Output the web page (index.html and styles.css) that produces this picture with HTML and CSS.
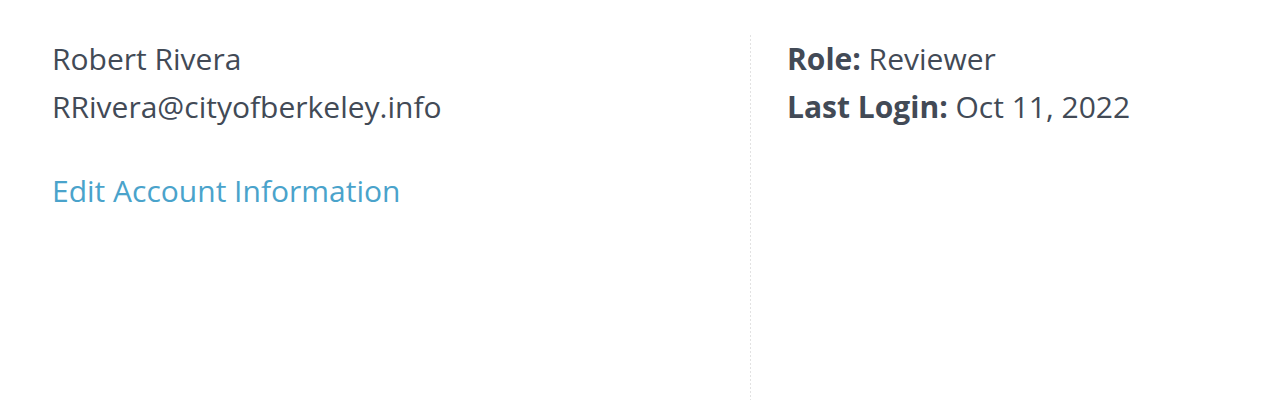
FILE: index.html
```html
<!DOCTYPE html>
<html>
<head>
<meta charset="utf-8">
<link rel="stylesheet" href="styles.css">
</head>
<body>
<div class="account">
  <div class="col col-left">
    <div class="line">Robert Rivera</div>
    <div class="line">RRivera@cityofberkeley.info</div>
    <a class="edit-link" href="#">Edit Account Information</a>
  </div>
  <div class="col col-right">
    <div class="line"><strong>Role:</strong> Reviewer</div>
    <div class="line"><strong>Last Login:</strong> Oct 11, 2022</div>
  </div>
</div>
</body>
</html>
```
FILE: styles.css
```css
html, body {
  margin: 0;
  padding: 0;
  background: #ffffff;
}
body {
  font-family: "Open Sans", "Liberation Sans", sans-serif;
  color: #424a56;
  font-size: 30px;
  line-height: 48px;
}
.account {
  display: flex;
  padding: 35px 0 0 52px;
  height: 365px;
}
.col-left {
  width: 698px;
}
.col-right {
  padding-left: 37px;
  flex: 1;
  background-image: linear-gradient(to bottom, #e2e2e2 50%, transparent 50%);
  background-size: 1px 4px;
  background-repeat: repeat-y;
  background-position: left top;
}
.edit-link {
  display: block;
  margin-top: 36px;
  color: #4aa3cb;
  text-decoration: none;
}
strong {
  font-weight: 700;
}
```
